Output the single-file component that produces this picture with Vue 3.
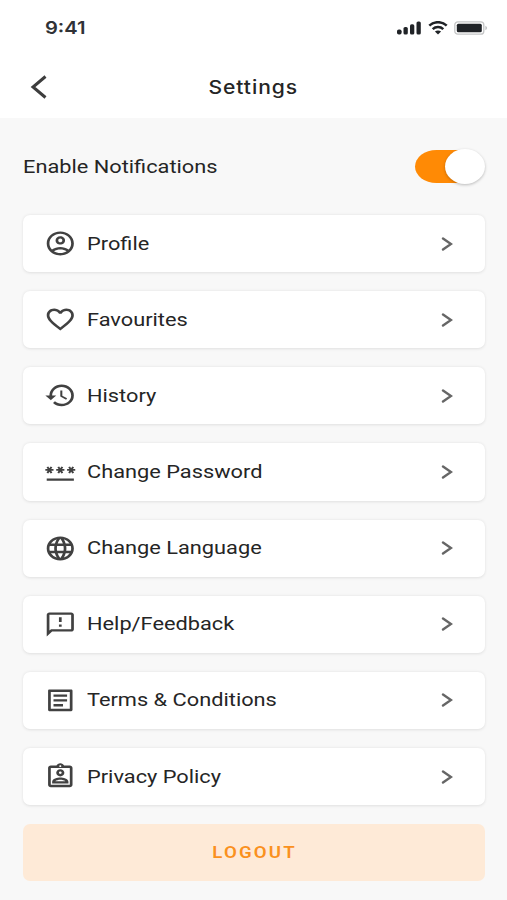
<script setup>
import { ref } from 'vue'

const notifications = ref(true)

const items = [
  {
    label: 'Profile',
    icon: 'M12 2C6.48 2 2 6.48 2 12s4.48 10 10 10 10-4.48 10-10S17.52 2 12 2zM7.35 18.5C8.66 17.56 10.26 17 12 17s3.34.56 4.65 1.5C15.34 19.44 13.74 20 12 20s-3.34-.56-4.65-1.5zm10.79-1.38C16.45 15.8 14.32 15 12 15s-4.45.8-6.14 2.12C4.7 15.73 4 13.95 4 12c0-4.42 3.58-8 8-8s8 3.58 8 8c0 1.95-.7 3.73-1.86 5.12zM12 6c-1.93 0-3.5 1.57-3.5 3.5S10.07 13 12 13s3.500-1.570 3.500-3.500S13.930 6 12 6zm0 5c-.83 0-1.500-.670-1.500-1.500S11.170 8 12 8s1.500.670 1.500 1.500S12.830 11 12 11z'
  },
  {
    label: 'Favourites',
    icon: 'M16.500 3c-1.740 0-3.410.810-4.500 2.090C10.910 3.810 9.240 3 7.500 3 4.420 3 2 5.420 2 8.500c0 3.780 3.400 6.860 8.550 11.540L12 21.350l1.450-1.320C18.600 15.360 22 12.280 22 8.500 22 5.420 19.580 3 16.500 3zm-4.400 15.550l-.1.100-.1-.1C7.140 14.240 4 11.390 4 8.500 4 6.500 5.500 5 7.500 5c1.540 0 3.040.990 3.570 2.360h1.870C13.460 5.990 14.960 5 16.500 5c2 0 3.500 1.500 3.500 3.500 0 2.890-3.140 5.740-7.900 10.050z'
  },
  {
    label: 'History',
    icon: 'M13 3a9 9 0 0 0-9 9H1l3.890 3.890.070.140L9 12H6c0-3.870 3.130-7 7-7s7 3.130 7 7-3.130 7-7 7c-1.930 0-3.680-.790-4.940-2.060l-1.420 1.420A8.954 8.954 0 0 0 13 21a9 9 0 0 0 0-18zm-1 5v5l4.280 2.540.720-1.210-3.500-2.080V8H12z'
  },
  {
    label: 'Change Password',
    icon: 'M2 17h20v2H2v-2zm1.150-4.050L4 11.470l.850 1.480 1.300-.750-.850-1.480H7v-1.500H5.300l.850-1.470L4.850 7 4 8.470 3.150 7l-1.300.750.850 1.470H1v1.500h1.700l-.850 1.480 1.300.750zm6.700-.750l1.300.750.850-1.480.850 1.480 1.300-.750-.850-1.480H15v-1.500h-1.700l.850-1.470-1.300-.750L12 8.470 11.150 7l-1.300.750.850 1.470H9v1.500h1.700l-.850 1.480zM23 9.220h-1.700l.850-1.470-1.300-.750L20 8.470 19.150 7l-1.300.750.850 1.470H17v1.500h1.700l-.850 1.480 1.300.750.850-1.480.850 1.480 1.300-.750-.850-1.480H23v-1.500z'
  },
  {
    label: 'Change Language',
    icon: 'M11.990 2C6.470 2 2 6.480 2 12s4.470 10 9.990 10C17.520 22 22 17.520 22 12S17.520 2 11.990 2zm6.930 6h-2.950a15.650 15.650 0 0 0-1.380-3.560A8.030 8.030 0 0 1 18.920 8zM12 4.040c.830 1.200 1.480 2.530 1.910 3.960h-3.820c.430-1.430 1.080-2.760 1.910-3.960zM4.260 14C4.100 13.360 4 12.690 4 12s.1-1.360.260-2h3.380c-.080.660-.140 1.320-.140 2s.060 1.340.140 2H4.260zm.820 2h2.950c.320 1.250.780 2.450 1.380 3.560A7.987 7.987 0 0 1 5.080 16zm2.950-8H5.080a7.987 7.987 0 0 1 4.330-3.560A15.650 15.650 0 0 0 8.030 8zM12 19.960c-.830-1.200-1.480-2.530-1.910-3.960h3.820c-.430 1.430-1.080 2.760-1.910 3.960zM14.340 14H9.660c-.090-.660-.160-1.320-.160-2s.070-1.350.160-2h4.680c.090.650.160 1.320.160 2s-.070 1.340-.160 2zm.250 5.560c.600-1.110 1.060-2.310 1.380-3.560h2.950a8.030 8.030 0 0 1-4.330 3.560zM16.360 14c.080-.660.140-1.320.140-2s-.060-1.340-.140-2h3.380c.160.640.260 1.310.260 2s-.1 1.360-.260 2h-3.380z'
  },
  {
    label: 'Help/Feedback',
    icon: 'M20 2H4c-1.100 0-1.990.900-1.990 2L2 22l4-4h14c1.100 0 2-.900 2-2V4c0-1.100-.900-2-2-2zm0 14H5.170L4 17.170V4h16v12zM11 12h2v2h-2zm0-6h2v4h-2z'
  },
  {
    label: 'Terms & Conditions',
    icon: 'M19 5v14H5V5h14m1.100-2H3.900c-.5 0-.9.400-.9.900v16.200c0 .4.400.9.900.9h16.200c.4 0 .9-.5.900-.9V3.900c0-.5-.5-.9-.9-.9zM7 7h10v2H7zM7 11h10v2H7zM7 15h7v2H7z'
  },
  {
    label: 'Privacy Policy',
    icon: 'M19 3h-4.180C14.400 1.840 13.300 1 12 1s-2.400.840-2.820 2H5c-1.100 0-2 .9-2 2v14c0 1.100.9 2 2 2h14c1.100 0 2-.9 2-2V5c0-1.100-.9-2-2-2zm-7-.25c.41 0 .75.340.75.750s-.34.750-.75.750-.75-.34-.75-.750.340-.750.750-.750zM19 19H5V5h14v14zM12 6c-1.650 0-3 1.350-3 3s1.350 3 3 3 3-1.350 3-3-1.350-3-3-3zm0 4c-.550 0-1-.450-1-1s.450-1 1-1 1 .450 1 1-.450 1-1 1zm-6 6.470V18h12v-1.530c0-2.500-3.970-3.580-6-3.580s-6 1.070-6 3.580zM8.310 16c.690-.560 2.380-1.120 3.690-1.120s3.010.560 3.690 1.120H8.310z'
  }
]
</script>

<template>
  <div class="screen">
    <header class="header">
      <div class="status">
        <span class="time">9:41</span>
        <div class="indicators">
          <svg class="signal" viewBox="0 0 24 14">
            <rect x="0" y="8.500" width="4.600" height="5" rx="1.800" />
            <rect x="6.500" y="6" width="4.300" height="7.500" rx="1.600" />
            <rect x="13" y="3.300" width="4.300" height="10.200" rx="1.600" />
            <rect x="19.500" y="0.500" width="4.300" height="13" rx="1.600" />
          </svg>
          <svg class="wifi" viewBox="0 0 20 14">
            <path d="M1.300 4.700C6 0 14 0 18.700 4.700M4.700 8.200c3-2.800 7.600-2.800 10.600 0" />
            <path class="dot" d="M6.900 10.600c1.800-1.500 4.400-1.500 6.200 0L10 13.400z" />
          </svg>
          <svg class="battery" viewBox="0 0 34 14">
            <rect class="shell" x="0.800" y="0.800" width="29" height="12.400" rx="3" />
            <rect class="charge" x="2.800" y="2.800" width="25" height="8.400" rx="1.500" />
            <path class="tip" d="M31.300 4.800c2.400.8 2.400 3.600 0 4.400z" />
          </svg>
        </div>
      </div>
      <div class="titlebar">
        <svg class="back" viewBox="0 0 18 26"><path d="M15.500 2.500 3 13l12.500 10.500" /></svg>
        <h1><span>Settings</span></h1>
      </div>
    </header>

    <main class="content">
      <div class="notify">
        <span class="label">Enable Notifications</span>
        <button
          class="toggle"
          :class="{ on: notifications }"
          role="switch"
          :aria-checked="notifications"
          @click="notifications = !notifications"
        >
          <span class="knob"></span>
        </button>
      </div>

      <nav class="list">
        <button v-for="item in items" :key="item.label" class="card">
          <svg class="icon" viewBox="0 0 24 24" preserveAspectRatio="none"><path :d="item.icon" /></svg>
          <span class="label">{{ item.label }}</span>
          <svg class="chevron" viewBox="0 0 12 16"><path d="M2 2.400 10 8l-8 5.600" /></svg>
        </button>
        <button class="logout"><span>LOGOUT</span></button>
      </nav>
    </main>
  </div>
</template>

<style>
body {
  margin: 0;
  background: #f8f8f8;
}
</style>

<style scoped>
.screen {
  box-sizing: border-box;
  width: 507px;
  height: 900px;
  overflow: hidden;
  background: #f8f8f8;
  font-family: Roboto, sans-serif;
  color: #252525;
}

button {
  margin: 0;
  padding: 0;
  border: 0;
  font: inherit;
  color: inherit;
}

svg {
  display: block;
  flex: none;
}

.header {
  height: 118px;
  background: #fff;
}

.status {
  display: flex;
  align-items: center;
  justify-content: space-between;
  height: 56px;
  padding: 0 19px 0 45px;
}

.time {
  font: 600 17.500px/20px Inter, sans-serif;
  color: #303236;
  transform: scaleX(1.15);
  transform-origin: left center;
}

.indicators {
  display: flex;
  align-items: center;
  gap: 6.500px;
  fill: #202327;
}

.signal {
  width: 24px;
  height: 14px;
}

.wifi {
  width: 20px;
  height: 14px;
}

.wifi path {
  fill: none;
  stroke: #202327;
  stroke-width: 2.5;
}

.wifi .dot {
  fill: #202327;
  stroke: none;
}

.battery {
  width: 34px;
  height: 14px;
}

.shell {
  fill: none;
  stroke: #c4c5c6;
  stroke-width: 1.3;
}

.tip {
  fill: #c4c5c6;
}

.titlebar {
  display: grid;
  grid-template-columns: 60px 1fr 60px;
  align-items: center;
  height: 61px;
}

.back {
  width: 18px;
  height: 26px;
  margin-left: 29.500px;
}

.back path {
  fill: none;
  stroke: #3d3d3d;
  stroke-width: 3;
}

h1 {
  margin: 0;
  text-align: center;
  font: 500 18.500px/24px Inter, sans-serif;
}

h1 span {
  display: inline-block;
  letter-spacing: 0.8px;
  transform: scaleX(1.14);
}

.content {
  padding: 0 22px 0 22.500px;
}

.notify {
  display: flex;
  align-items: center;
  justify-content: space-between;
  height: 97px;
}

.label {
  font-size: 19.200px;
  line-height: 24px;
  white-space: nowrap;
  transform: scaleX(1.135);
  transform-origin: left center;
}

.toggle {
  display: flex;
  align-items: center;
  width: 70.500px;
  height: 33.500px;
  border-radius: 22px / 17px;
  background: #c9c9c9;
}

.toggle.on {
  justify-content: flex-end;
  background: linear-gradient(to right, #ff8a05 54px, transparent 54px);
}

.knob {
  width: 40.500px;
  height: 35.500px;
  flex: none;
  border-radius: 50%;
  background: #fff;
  box-shadow: 0 1px 3px rgba(0, 0, 0, 0.25);
}

.list {
  display: flex;
  flex-direction: column;
  gap: 19px;
}

.card {
  display: flex;
  align-items: center;
  height: 57.150px;
  padding: 0 32px 0 21.500px;
  border-radius: 7px;
  background: #fff;
  box-shadow: 0 0.5px 3px rgba(0, 0, 0, 0.1);
  text-align: left;
}

.icon {
  width: 32.600px;
  height: 28.800px;
  margin-right: 10px;
  fill: #414141;
}

.chevron {
  width: 12px;
  height: 16px;
  margin-left: auto;
}

.chevron path {
  fill: none;
  stroke: #666;
  stroke-width: 2.4;
  stroke-linecap: round;
}

.logout {
  height: 57px;
  border-radius: 7px;
  background: #feead7;
  font-size: 16.500px;
  font-weight: 600;
  line-height: 20px;
  color: #fa911e;
}

.logout span {
  display: inline-block;
  padding-left: 2px;
  letter-spacing: 1.9px;
  transform: scaleX(1.13);
}
</style>
